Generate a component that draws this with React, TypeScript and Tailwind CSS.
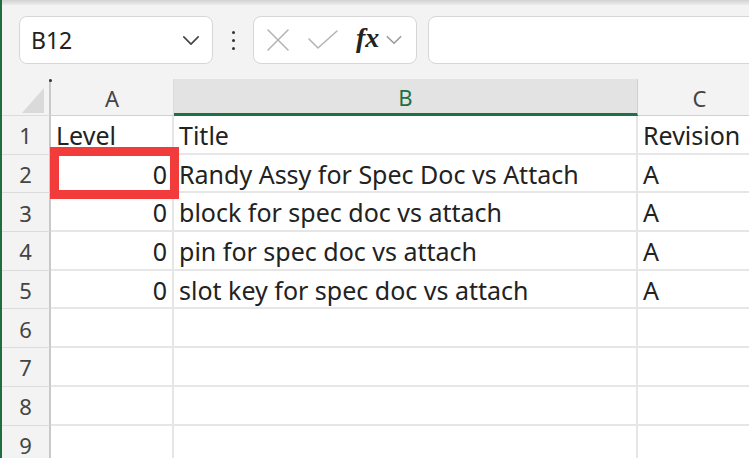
import React from 'react';

const rows: [string, string, string][] = [
  ['Level', 'Title', 'Revision'],
  ['0', 'Randy Assy for Spec Doc vs Attach', 'A'],
  ['0', 'block for spec doc vs attach', 'A'],
  ['0', 'pin for spec doc vs attach', 'A'],
  ['0', 'slot key for spec doc vs attach', 'A'],
  ['', '', ''],
  ['', '', ''],
  ['', '', ''],
  ['', '', ''],
];

function Chevron({ className }: { className?: string }) {
  return (
    <svg viewBox="0 0 20 12" className={className} fill="none" stroke="currentColor" strokeWidth="1.8" strokeLinecap="round" strokeLinejoin="round">
      <polyline points="2,2 10,10 18,2" />
    </svg>
  );
}

export default function App() {
  return (
    <div
      className="w-[749px] h-[458px] overflow-hidden bg-[#f3f3f3] border-l-2 border-[#1e6e3f] flex flex-col text-[#222]"
      style={{ fontFamily: '"Noto Sans", "Open Sans", sans-serif' }}
    >
      {/* top ribbon edge */}
      <div className="h-[5px] shrink-0 bg-gradient-to-b from-[#d2d2d2] to-[#ececec]" />

      {/* formula bar */}
      <div className="h-[74px] shrink-0 flex items-start pt-[11px] pl-[17px]">
        <div className="w-[194px] h-[48px] shrink-0 bg-white rounded-lg border border-[#d6d6d6] flex items-center justify-between pl-[11px] pr-[12px]">
          <span className="text-[23px] leading-none">B12</span>
          <Chevron className="w-[18px] h-[11px] text-[#444]" />
        </div>
        <div className="w-[40px] h-[48px] shrink-0 flex flex-col items-center justify-center gap-[5px]">
          <span className="w-[3px] h-[3px] rounded-full bg-[#333]" />
          <span className="w-[3px] h-[3px] rounded-full bg-[#333]" />
          <span className="w-[3px] h-[3px] rounded-full bg-[#333]" />
        </div>
        <div className="w-[164px] h-[48px] shrink-0 bg-white rounded-lg border border-[#d6d6d6] flex items-center pl-[12px]">
          <svg viewBox="0 0 24 24" className="w-[24px] h-[24px] text-[#b4b4b4]" fill="none" stroke="currentColor" strokeWidth="1.6" strokeLinecap="round">
            <line x1="2" y1="2" x2="22" y2="22" />
            <line x1="22" y1="2" x2="2" y2="22" />
          </svg>
          <svg viewBox="0 0 30 20" className="ml-[18px] w-[30px] h-[20px] text-[#b4b4b4]" fill="none" stroke="currentColor" strokeWidth="1.6" strokeLinecap="round" strokeLinejoin="round">
            <polyline points="1,9 10,18 29,1" />
          </svg>
          <span
            className="ml-[18px] text-[28px] leading-none italic font-bold text-[#222] -mt-[4px]"
            style={{ fontFamily: '"Liberation Serif", "DejaVu Serif", serif' }}
          >
            fx
          </span>
          <Chevron className="ml-[6px] w-[18px] h-[10px] text-[#999]" />
        </div>
        <div className="ml-[11px] w-[340px] h-[48px] bg-white rounded-lg border border-[#d6d6d6] shrink-0" />
      </div>

      {/* sheet */}
      <div className="relative flex-1">
        {/* column headers */}
        <div className="flex h-[37px]">
          <div className="relative w-[49px] shrink-0 border-r-2 border-[#c9c9c9] border-b border-b-[#dcdcdc]">
            <span className="absolute left-[47px] top-0 w-[3px] h-[3px] rounded-full bg-[#333]" />
            <svg viewBox="0 0 22 25" className="absolute left-[20px] top-[9px] w-[22px] h-[25px]">
              <polygon points="22,0 22,25 0,25" fill="#dadada" />
            </svg>
          </div>
          <div className="w-[123px] shrink-0 border-r border-[#dcdcdc] border-b border-b-[#d0d0d0] flex items-center justify-center text-[22px] text-[#444] pt-[2px]">
            A
          </div>
          <div className="w-[464px] shrink-0 bg-[#e3e3e3] border-r border-[#cfcfcf] border-b-[3px] border-b-[#1e7145] flex items-center justify-center text-[22px] text-[#1e7145] pt-[3px]">
            B
          </div>
          <div className="w-[123px] shrink-0 border-b border-[#d0d0d0] flex items-center justify-center text-[22px] text-[#444] pt-[2px]">
            C
          </div>
        </div>

        {/* rows */}
        {rows.map((r, i) => (
          <div key={i} className="flex h-[38.7px]">
            <div className="w-[49px] shrink-0 border-r-2 border-[#c9c9c9] border-b border-b-[#dcdcdc] flex items-center justify-center text-[22px] text-[#444] pt-[2px]">
              {i + 1}
            </div>
            <div
              className={`w-[123px] shrink-0 bg-white border-r-2 border-b-2 border-[#e6e6e6] flex items-center text-[25px] pt-[3px] px-[5px] ${
                i === 0 ? 'justify-start' : 'justify-end'
              }`}
            >
              {r[0]}
            </div>
            <div className="w-[464px] shrink-0 bg-white border-r-2 border-b-2 border-[#e6e6e6] flex items-center text-[25px] pt-[3px] px-[5px] whitespace-nowrap">
              {r[1]}
            </div>
            <div className="w-[123px] shrink-0 bg-white border-b-2 border-[#e6e6e6] flex items-center text-[25px] pt-[3px] px-[5px] whitespace-nowrap">
              {r[2]}
            </div>
          </div>
        ))}

        {/* annotation box around A2 */}
        <div className="absolute left-[48px] top-[68px] w-[129px] h-[52px] border-[9px] border-[#f23b3b]" />
      </div>
    </div>
  );
}
